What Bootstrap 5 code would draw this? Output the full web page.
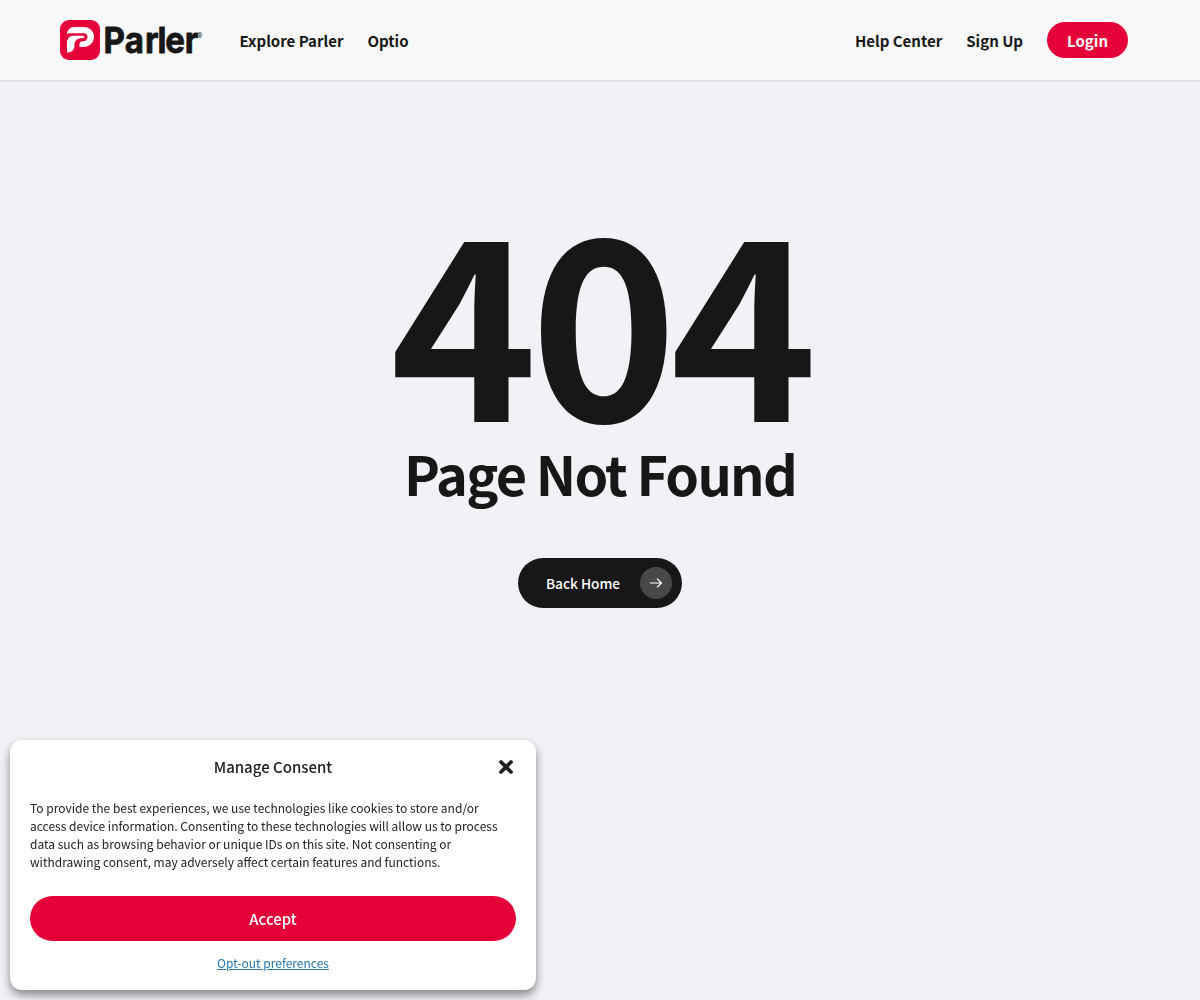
<!DOCTYPE html>
<html lang="en">
<head>
    <meta charset="UTF-8">
    <meta name="viewport" content="width=device-width, initial-scale=1.0">
    <title>Page Not Found - Parler</title>
    <link href="https://cdn.jsdelivr.net/npm/bootstrap@5.3.0/dist/css/bootstrap.min.css" rel="stylesheet">
    <style>
        body {
            font-family: "Noto Sans CJK SC", "Noto Sans", sans-serif;
            background-color: #f0f2f6;
            color: #171717;
            height: 100vh;
            overflow: hidden;
        }
        /* Header */
        .site-header {
            height: 80px;
            padding: 0 72px 0 60px;
            background-color: #f8f8f8;
            box-shadow: 0 0 3px rgba(0, 0, 0, 0.22);
        }
        .site-header .navbar-brand {
            margin-right: 36.5px;
        }
        .site-header .nav-link {
            padding: 2px 0 0;
            font-size: 15px;
            line-height: 24px;
            font-weight: 600;
            color: #171717;
        }
        .main-menu {
            gap: 24px;
        }
        .site-header .btn-login {
            height: 36px;
            padding: 7px 20px 5px;
            color: #fff;
            background-color: #e60039;
        }
        /* 404 message */
        .error-page {
            padding-top: 108px;
        }
        .error-code {
            font-size: 250px;
            line-height: 250px;
            font-weight: 700;
            letter-spacing: -7.5px;
        }
        .error-title {
            margin: 5px 0 55px;
            font-size: 54px;
            line-height: 60px;
            font-weight: 600;
            letter-spacing: -1.75px;
        }
        .btn-home {
            height: 50px;
            padding: 0 10px 0 28px;
            gap: 20px;
            font-size: 13.7px;
            font-weight: 500;
            background-color: #171717;
        }
        .arrow-circle {
            width: 32px;
            height: 32px;
            background-color: #484848;
        }
        /* Cookie banner */
        .consent-box {
            left: 10px;
            bottom: 10px;
            width: 526px;
            height: 250px;
            padding: 15px 20px;
            border-radius: 12px;
            color: #222;
            box-shadow: 0 5px 10px rgba(0, 0, 0, 0.45);
        }
        .consent-title {
            font-size: 15px;
            line-height: 24px;
            font-weight: 500;
        }
        .consent-text {
            margin: 20px 0 25px;
            font-size: 12px;
            line-height: 18px;
        }
        .btn-accept {
            height: 45px;
            padding: 0;
            font-size: 15px;
            line-height: 45px;
            font-weight: 500;
            color: #fff;
            background-color: #e60039;
        }
        .consent-link {
            margin-top: 13px;
            font-size: 12px;
            line-height: 18px;
            color: #2676ad;
        }
    </style>
</head>
<body>

    <!-- Header -->
    <nav class="site-header navbar d-flex flex-nowrap align-items-center">
        <a class="navbar-brand p-0" href="#">
            <svg class="d-block overflow-visible" width="143" height="40" viewBox="0 0 143 40">
                <rect width="40" height="40" rx="9" fill="#e60039"/>
                <path fill="#fff" d="M7 14.500C7 10.500 10 7 14.500 7H23.500C29.500 7 34 11 34 16.800S29.500 27 23.500 27H19.500V24.500C19.500 22.300 20.500 21.300 22.500 21.300H23.500C26 21.300 27.500 19.200 27.500 17S26 13.200 23.500 13.200H8Z"/>
                <path fill="#fff" d="M7 32.500V23C7 18.500 9.500 15.800 14 15.800H22C23.500 15.800 24.300 16.200 24.500 17C24.300 17.800 23.500 18.200 22 18.200C17 18.200 14.500 20.500 14.500 25.500C14.500 30 11.500 32.500 7 32.500Z"/>
                <g transform="scale(0.92 1)">
                    <text x="47.200 70.500 92.500 106 114.500 135.500" y="33" font-family="Inter, sans-serif" font-size="36" font-weight="700" fill="#171717" stroke="#171717" stroke-width="0.800" stroke-linejoin="round">Parler</text>
                </g>
                <text x="137.300" y="18" font-family="Roboto, sans-serif" font-size="6.500" fill="#171717">®</text>
            </svg>
        </a>
        <div class="main-menu d-flex flex-grow-1 align-items-center">
            <a class="nav-link" href="#">Explore Parler</a>
            <a class="nav-link" href="#">Optio</a>
            <a class="nav-link ms-auto" href="#">Help Center</a>
            <a class="nav-link" href="#">Sign Up</a>
            <a class="nav-link btn-login rounded-pill" href="#">Login</a>
        </div>
    </nav>

    <!-- 404 message -->
    <main class="error-page text-center">
        <h1 class="error-code mb-0">404</h1>
        <h2 class="error-title">Page Not Found</h2>
        <a class="btn-home d-inline-flex align-items-center rounded-pill text-white text-decoration-none" href="#">
            <span>Back Home</span>
            <span class="arrow-circle d-flex align-items-center justify-content-center rounded-circle">
                <svg width="14" height="12" viewBox="0 0 14 12" fill="none" stroke="#fff" stroke-width="1.200" stroke-linecap="round" stroke-linejoin="round">
                    <path d="M1.500 6H12.500M8.300 1.800L12.500 6L8.300 10.200"/>
                </svg>
            </span>
        </a>
    </main>

    <!-- Cookie banner -->
    <div class="consent-box position-fixed bg-white d-flex flex-column">
        <div class="d-flex justify-content-center position-relative">
            <span class="consent-title">Manage Consent</span>
            <svg class="position-absolute end-0 top-50 translate-middle-y" width="20" height="20" viewBox="0 0 20 20" stroke="#222" stroke-width="3.800" stroke-linecap="round">
                <path d="M5 5L15 15M15 5L5 15"/>
            </svg>
        </div>
        <p class="consent-text">To provide the best experiences, we use technologies like cookies to store and/or<br>access device information. Consenting to these technologies will allow us to process<br>data such as browsing behavior or unique IDs on this site. Not consenting or<br>withdrawing consent, may adversely affect certain features and functions.</p>
        <button class="btn btn-accept rounded-pill border-0" type="button">Accept</button>
        <a class="consent-link text-center" href="#">Opt-out preferences</a>
    </div>

    <script src="https://cdn.jsdelivr.net/npm/bootstrap@5.3.0/dist/js/bootstrap.bundle.min.js"></script>
</body>
</html>
